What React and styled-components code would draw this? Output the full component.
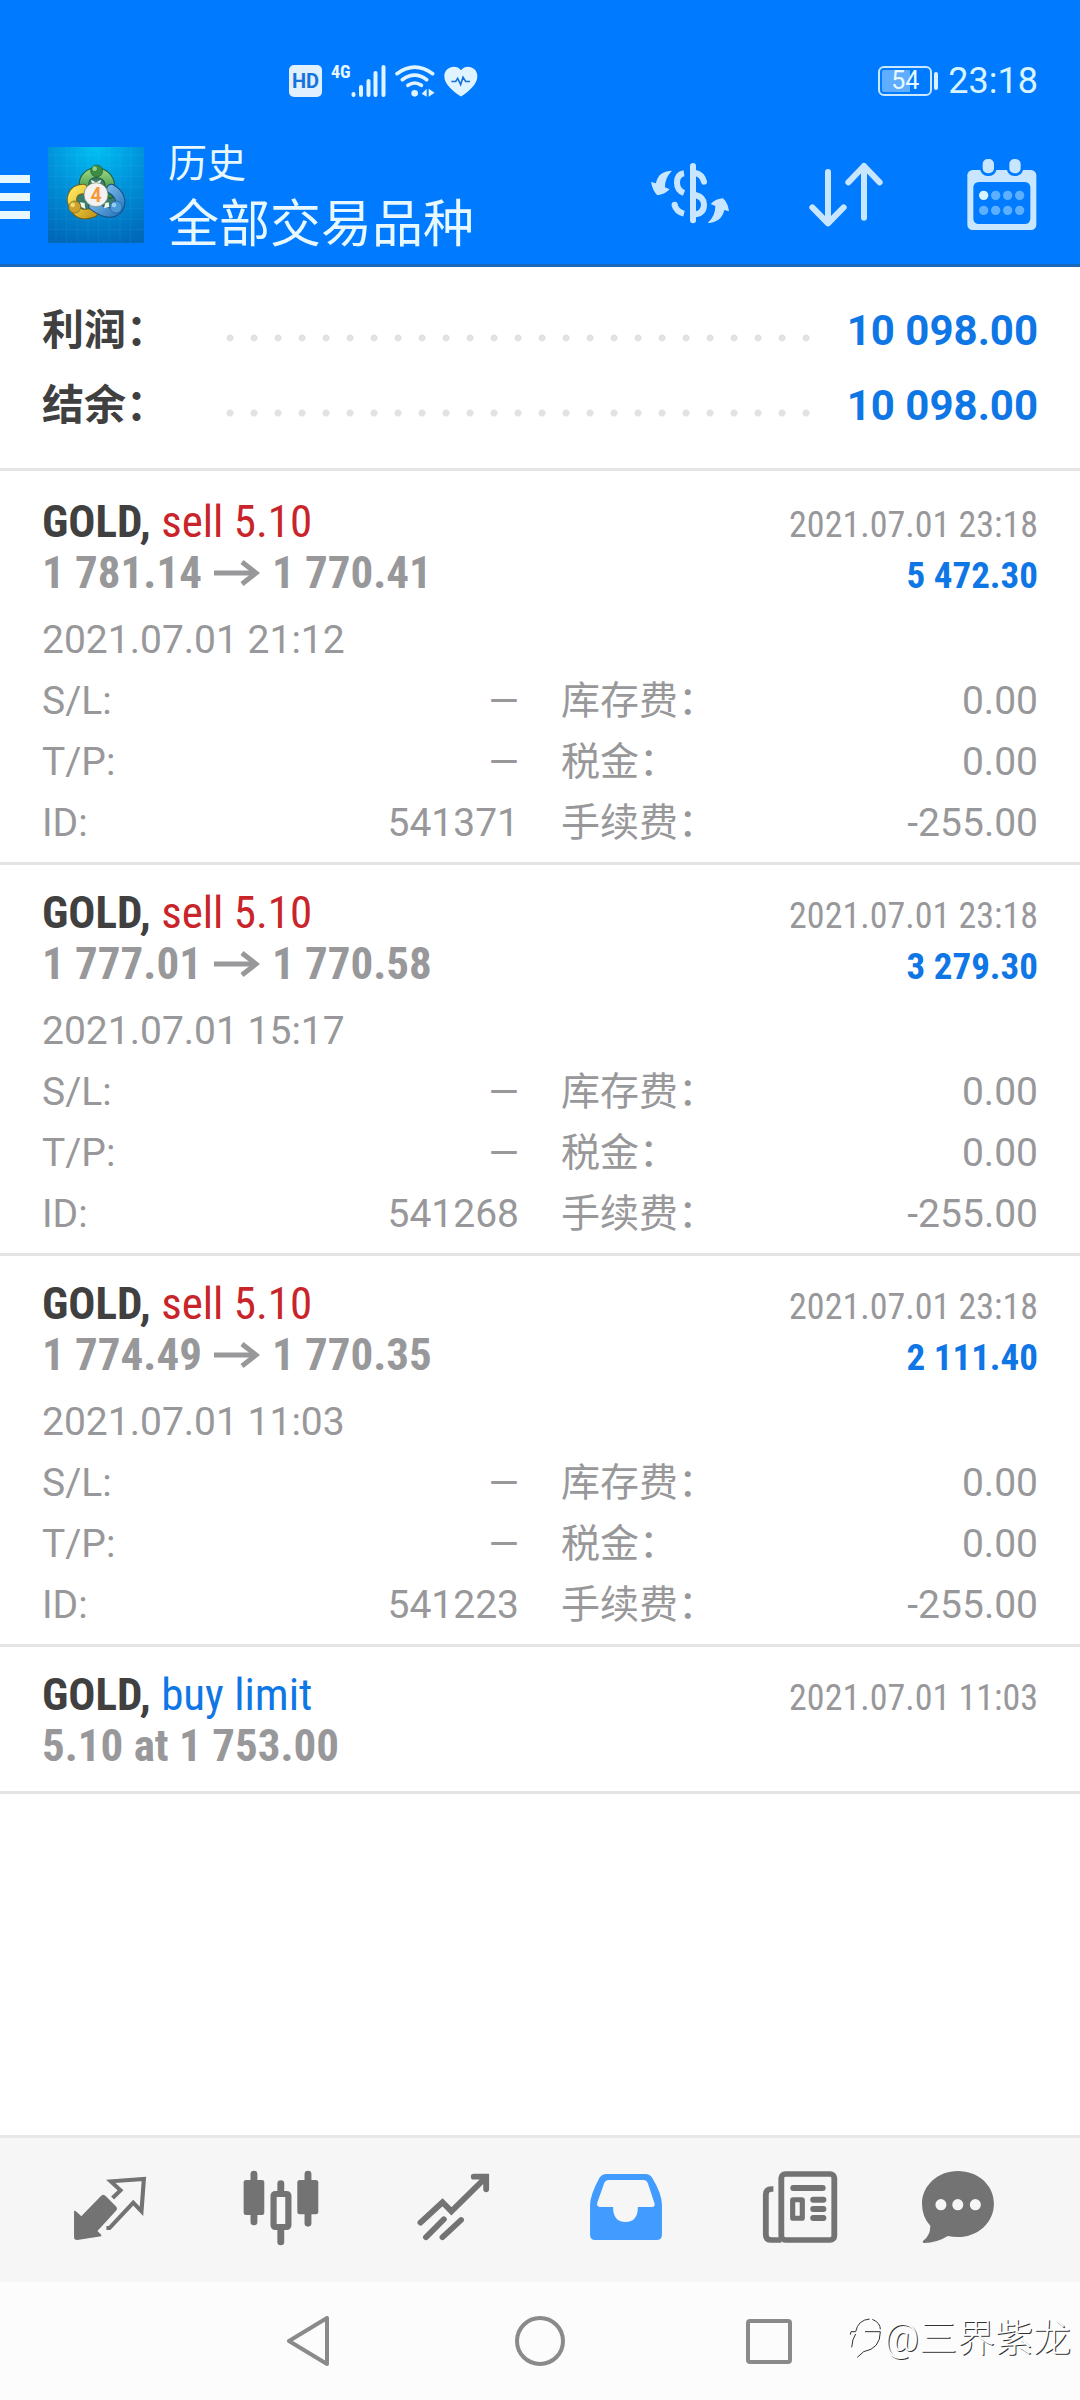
import React from "react";
import styled, { createGlobalStyle } from "styled-components";

const sans = `Roboto, "Noto Sans CJK SC", sans-serif`;
const condensed = `"Roboto Condensed", "Liberation Sans Narrow", Roboto, "Noto Sans CJK SC", sans-serif`;

const GlobalStyle = createGlobalStyle`
  *, *::before, *::after { box-sizing: border-box; }
  body { margin: 0; background: #fff; font-family: ${sans}; }
  button { border: 0; padding: 0; background: none; font: inherit; color: inherit; cursor: pointer; }
  svg { display: block; flex: none; }
  h1, p, ul, dl, dd { margin: 0; padding: 0; }
  ul { list-style: none; }
`;

const Screen = styled.div`
  display: flex;
  flex-direction: column;
  min-height: 100vh;
  background: #fff;
`;

const Top = styled.header`
  background: #007aff;
  border-bottom: 3px solid #1a68b8;
  color: #e8f8ff;
`;

const StatusBar = styled.div`
  display: flex;
  align-items: center;
  justify-content: space-between;
  height: 126px;
  padding: 36px 42px 0 289px;
`;

const StatusGroup = styled.div`
  display: flex;
  align-items: center;
  gap: ${(p) => p.$gap}px;
`;

const HdBadge = styled.span`
  width: 33px;
  border-radius: 5px;
  background: #e0f0ff;
  color: #1673dc;
  font-size: 20px;
  font-weight: 700;
  line-height: 32px;
  text-align: center;
`;

const Signal = styled.span`
  display: flex;
  align-items: flex-start;
`;

const Network = styled.span`
  font-family: ${condensed};
  font-size: 18px;
  font-weight: 700;
  line-height: 16px;
`;

const Battery = styled.span`
  display: flex;
  align-items: center;
  gap: 2px;
  &::after {
    content: "";
    width: 4px;
    height: 18px;
    border-radius: 2px;
    background: #d8f0ff;
  }
`;

const BatteryCell = styled.span`
  width: 54px;
  height: 30px;
  border: 2px solid #c8e8ff;
  border-radius: 6px;
  background: linear-gradient(90deg, #5fadff 60%, transparent 60%) content-box;
  padding: 2px;
  font-size: 25px;
  line-height: 22px;
  text-align: center;
`;

const Clock = styled.time`
  font-size: 36px;
  line-height: 36px;
  color: #d8f4ff;
`;

const AppBar = styled.div`
  display: flex;
  align-items: center;
  height: 138px;
`;

const MenuButton = styled.button`
  display: flex;
  flex-direction: column;
  gap: 10px;
  width: 48px;
  padding-top: 4px;
`;

const MenuLine = styled.span`
  width: 30px;
  height: 8px;
  background: #e8f8ff;
`;

const Titles = styled.div`
  flex: 1;
  padding-left: 24px;
`;

const Section = styled.p`
  font-size: 39px;
  line-height: 60px;
`;

const Title = styled.h1`
  font-size: 51px;
  font-weight: 400;
  line-height: 62px;
`;

const BarButton = styled.button`
  display: flex;
  justify-content: center;
  width: 156px;
`;

const Main = styled.main`
  flex: 1;
`;

const Summary = styled.dl`
  padding: 26px 42px 25px;
  border-bottom: 3px solid #e4e4e4;
`;

const SummaryRow = styled.div`
  display: flex;
  font-size: 42px;
  font-weight: 700;
  line-height: 75px;
`;

const SummaryLabel = styled.dt`
  width: 176px;
  color: #404040;
`;

const Leader = styled.span`
  flex: 1;
  margin-right: 30px;
  background: radial-gradient(circle at 12px 45px, #e2e2e2 3px, transparent 4px) 0 0 / 24px 75px repeat-x;
`;

const SummaryValue = styled.dd`
  color: #0f76e6;
`;

const List = styled.ul`
  padding-top: 3px;
`;

const Item = styled.li`
  padding: 22px 42px ${(p) => (p.$detailed ? 8 : 20)}px;
  border-bottom: 3px solid #e4e4e4;
`;

const Line = styled.div`
  display: flex;
  align-items: baseline;
  justify-content: space-between;
  height: 51px;
  font-family: ${condensed};
  line-height: 51px;
`;

const Symbol = styled.span`
  font-size: 45px;
  color: ${(p) => p.$color};
  b { color: #404040; }
`;

const Price = styled.span`
  display: flex;
  align-items: center;
  gap: 12px;
  font-size: 45px;
  font-weight: 700;
  color: #98989b;
`;

const Closed = styled.time`
  font-size: 36px;
  color: #98989b;
`;

const Profit = styled.span`
  font-size: 37px;
  font-weight: 700;
  color: #0f76e6;
`;

const Details = styled.div`
  padding-top: 12px;
  font-size: 39px;
  line-height: 61px;
  color: #98989a;
`;

const Grid = styled.dl`
  display: grid;
  grid-template-columns: 1fr 1fr;
  column-gap: 42px;
`;

const Pair = styled.div`
  display: flex;
  justify-content: space-between;
`;

const TabBar = styled.nav`
  display: flex;
  justify-content: space-between;
  padding: 24px;
  border-top: 3px solid #e8e8e8;
  background: #f6f6f6;
`;

const Tab = styled.button`
  flex: 1;
  display: flex;
  justify-content: center;
  color: ${(p) => (p.$active ? "#429bff" : "#737373")};
`;

const SystemBar = styled.footer`
  position: relative;
  display: flex;
  justify-content: center;
  height: 118px;
  background: #fcfcfc;
  color: #8a8a8a;
`;

const SystemButton = styled.button`
  display: flex;
  align-items: center;
  justify-content: center;
  width: 231px;
`;

const Watermark = styled.span`
  position: absolute;
  right: 9px;
  bottom: 37px;
  display: flex;
  align-items: center;
  font-size: 38px;
  font-weight: 300;
  line-height: 50px;
  color: #fff;
  text-shadow: 1px 1px 0 #333;
`;

const SignalIcon = () => (
  <svg width="35" height="34" viewBox="0 0 35 34" stroke="#e0f4ff" strokeWidth="4" strokeLinecap="round">
    <path d="M2.500 30v1M10 23v8M17.500 17v14M24.500 9v22M32.500 3v28" />
  </svg>
);

const WifiIcon = () => (
  <svg width="40" height="34" viewBox="376 68 120 102" fill="none" stroke="#e0f4ff" strokeWidth="11" strokeLinecap="round">
    <path d="M382 97Q435 58 489 97M398 115Q435 88 471 115M415 132Q435 118 455 132" />
    <circle cx="435" cy="156" r="10" fill="#e0f4ff" stroke="none" />
    <path d="M456 157l15-15v24zM477 142v24l18-12z" fill="#e0f4ff" stroke="none" />
  </svg>
);

const HeartIcon = () => (
  <svg width="34" height="31" viewBox="524 74 102 92">
    <path d="M575 165C550 148 525 128 525 104C525 76 560 66 575 86C590 66 624 76 624 104C624 128 600 148 575 165Z" fill="#e0f4ff" />
    <path d="M546 120h13l6-9 9 18 7-22 8 13h13" fill="none" stroke="#1673dc" strokeWidth="5" />
  </svg>
);

const Logo = () => (
  <svg width="96" height="96" viewBox="0 0 288 288">
    <defs>
      <radialGradient id="sky" cx=".5" cy="0" r="1.050">
        <stop offset="0" stopColor="#00c0f4" />
        <stop offset=".5" stopColor="#0090d8" />
        <stop offset="1" stopColor="#0068b8" />
      </radialGradient>
      <linearGradient id="green" x2="0" y2="1"><stop stopColor="#8ccf7c" /><stop offset="1" stopColor="#2f8a3c" /></linearGradient>
      <linearGradient id="gold" x2="1" y2="1"><stop stopColor="#ffe65c" /><stop offset="1" stopColor="#c79a1c" /></linearGradient>
      <linearGradient id="blue" x2="1" y2="1"><stop stopColor="#8cc8f0" /><stop offset="1" stopColor="#2c78c0" /></linearGradient>
    </defs>
    <path d="M0 0h288v288H0z" fill="url(#sky)" />
    <path d="M24 0v288M56 0v288M88 0v288M120 0v288M152 0v288M184 0v288M216 0v288M248 0v288M0 24h288M0 56h288M0 88h288M0 120h288M0 152h288M0 184h288M0 216h288M0 248h288" stroke="#7fe0ff" strokeOpacity=".12" strokeWidth="2" />
    <path d="M106 114Q112 62 146 62Q184 64 188 120L214 150Q222 196 190 206Q166 204 144 186Q120 208 84 198Q60 184 76 136Z" fill="#3a7c6c" />
    <g fill="none" strokeLinecap="round">
      <path d="M108 114C104 66 186 62 186 120V140" stroke="#245c38" strokeWidth="31" />
      <path d="M108 114C104 66 186 62 186 120V140" stroke="url(#green)" strokeWidth="25" />
      <path d="M106 126C70 128 66 158 78 180Q94 212 136 196" stroke="#6c6018" strokeWidth="31" />
      <path d="M106 126C70 128 66 158 78 180Q94 212 136 196" stroke="url(#gold)" strokeWidth="25" />
      <path d="M190 126C214 140 226 164 208 188Q182 210 136 176" stroke="#174c84" strokeWidth="31" />
      <path d="M190 126C214 140 226 164 208 188Q182 210 136 176" stroke="url(#blue)" strokeWidth="25" />
    </g>
    <path d="M128 98l16 8 16-8-6 16h-20zM96 166l14 2 2 18-12-6zM182 166l-10 2-4 16 16-4z" fill="#eef8e4" />
    <circle cx="146" cy="72" r="18" fill="#3e8c44" stroke="#1f5c34" strokeWidth="2" />
    <circle cx="140" cy="65" r="7" fill="#8ccf8a" />
    <circle cx="80" cy="180" r="18" fill="#cda22c" stroke="#75631c" strokeWidth="2" />
    <circle cx="74" cy="174" r="7" fill="#f2da74" />
    <circle cx="204" cy="180" r="18" fill="#4b9ad8" stroke="#1d5c98" strokeWidth="2" />
    <circle cx="198" cy="174" r="7" fill="#98cdf2" />
    <circle cx="144" cy="143" r="36" fill="#f4f2f0" stroke="#6c7c70" strokeWidth="2" />
    <text x="144" y="164" textAnchor="middle" fontFamily="Roboto, sans-serif" fontWeight="700" fontSize="58" fill="#f49a3c">4</text>
  </svg>
);

const CurrencyIcon = () => (
  <svg width="80" height="72" viewBox="90 86 240 216" fill="none" stroke="#c8e6ff" strokeWidth="18">
    <path d="M219 107v163" strokeLinecap="round" />
    <path d="M192 129Q171 132 171 157Q171 180 192 188M192 250Q169 244 163 223" />
    <circle cx="164" cy="223" r="9" fill="#c8e6ff" stroke="none" />
    <path d="M226 128Q246 132 252 154" strokeLinecap="round" />
    <path d="M226 194Q252 200 252 223Q252 248 226 252" />
    <path d="M156 121Q114 122 108 159L93 155Q98 181 112 195Q133 193 149 177L135 171Q134 142 156 121ZM263 278Q305 276 313 239L327 243Q324 218 309 204Q288 205 272 221L286 227Q286 258 263 278Z" fill="#c8e6ff" stroke="none" />
  </svg>
);

const SortIcon = () => (
  <svg width="80" height="72" viewBox="558 86 240 216" fill="none" stroke="#c8e6ff" strokeWidth="18" strokeLinecap="round" strokeLinejoin="round">
    <path d="M624 125v154M577 231l47 48 47-48M732 262V107M685 156l47-49 47 49" />
  </svg>
);

const CalendarIcon = () => (
  <svg width="80" height="72" viewBox="1028 84 240 216" fill="#c8e6ff">
    <rect x="1044" y="117" width="207" height="180" rx="16" />
    <rect x="1062" y="153" width="171" height="126" rx="16" fill="#007aff" />
    <rect x="1086" y="80" width="42" height="51" rx="19" stroke="#007aff" strokeWidth="8" />
    <rect x="1166" y="80" width="42" height="51" rx="19" stroke="#007aff" strokeWidth="8" />
    {[193, 238].map((y) => [1093, 1129, 1165, 1201].map((x) => (
      <circle key={`${x}-${y}`} cx={x} cy={y} r="14" fill={x === 1093 && y === 193 ? "#d8f4ff" : "#5cb0ff"} />
    )))}
  </svg>
);

const ArrowIcon = () => (
  <svg width="46" height="26" viewBox="0 0 46 26" fill="none" stroke="currentColor" strokeWidth="5">
    <path d="M0 13h42" />
    <path d="M28 2l14 11-14 11" />
  </svg>
);

const TabIcon = ({ x, children }) => (
  <svg width="96" height="96" viewBox={`${x} 126 279 288`} preserveAspectRatio="none" fill="currentColor">
    {children}
  </svg>
);

const tabs = [
  {
    label: "行情",
    icon: (
      <TabIcon x={180}>
        <path d="M299 224Q304 224 309 230L338 260Q342 266 337 272L283 333L294 344V349L224 360Q215 360 215 352V272Q222 272 236 289L291 230Q295 225 299 224Z" />
        <path d="M327 234L350 211L322 184L418 177L411 274L387 248L318 324H309" fill="none" stroke="currentColor" strokeWidth="12" />
      </TabIcon>
    ),
  },
  {
    label: "图表",
    icon: (
      <TabIcon x={681}>
        <path d="M739 162v144M896 162v148M817 191v30M817 326v40" stroke="currentColor" strokeWidth="20" strokeLinecap="round" />
        <rect x="709" y="180" width="60" height="105" rx="7" />
        <rect x="865" y="180" width="61" height="103" rx="7" />
        <rect x="796" y="222" width="43" height="99" rx="5" fill="none" stroke="currentColor" strokeWidth="18" />
      </TabIcon>
    ),
  },
  {
    label: "交易",
    icon: (
      <TabIcon x={1179}>
        <path d="M1221 308L1285 247L1311 274L1410 173M1376 170H1412V208M1237 352L1289 298M1285 352L1339 300" fill="none" stroke="currentColor" strokeWidth="17" strokeLinecap="round" />
      </TabIcon>
    ),
  },
  {
    label: "历史",
    active: true,
    icon: (
      <TabIcon x={112}>
        <path fillRule="evenodd" d="M196 162H308Q321 162 328 174Q356 222 356 255V344Q356 360 340 360H162Q147 360 147 344V255Q147 226 174 174Q181 162 196 162ZM202 180Q192 180 188 190L168 248Q165 261 178 261H214Q214 306 250 306Q286 306 286 261H326Q338 261 334 249L315 190Q311 180 302 180Z" />
      </TabIcon>
    ),
  },
  {
    label: "新闻",
    icon: (
      <TabIcon x={609}>
        <rect x="700" y="162" width="154" height="198" rx="12" fill="none" stroke="currentColor" strokeWidth="17" />
        <path d="M677 207H672Q655 207 655 224V344Q655 360 672 360H700" fill="none" stroke="currentColor" strokeWidth="17" />
        <path d="M735 204H820M793 239H822M793 267H822M793 294H822" stroke="currentColor" strokeWidth="18" strokeLinecap="round" />
        <rect x="733" y="239" width="28" height="56" rx="2" fill="none" stroke="currentColor" strokeWidth="15" />
      </TabIcon>
    ),
  },
  {
    label: "消息",
    icon: (
      <TabIcon x={1109}>
        <path fillRule="evenodd" d="M1213 153C1272 153 1318 195 1318 251C1318 309 1270 351 1213 351Q1198 351 1184 348Q1154 368 1114 369Q1108 367 1114 361Q1134 345 1133 317Q1109 290 1109 251C1109 197 1155 153 1213 153ZM1164 237a16 17 0 100 34 16 17 0 000-34ZM1213 237a16 17 0 100 34 16 17 0 000-34ZM1264 237a16 17 0 100 34 16 17 0 000-34Z" />
      </TabIcon>
    ),
  },
];

const summary = [
  ["利润：", "10 098.00"],
  ["结余：", "10 098.00"],
];

const trades = [
  { open: "1 781.14", close: "1 770.41", opened: "2021.07.01 21:12", profit: "5 472.30", id: "541371" },
  { open: "1 777.01", close: "1 770.58", opened: "2021.07.01 15:17", profit: "3 279.30", id: "541268" },
  { open: "1 774.49", close: "1 770.35", opened: "2021.07.01 11:03", profit: "2 111.40", id: "541223" },
];

const Trade = ({ open, close, opened, profit, id }) => (
  <Item $detailed>
    <Line>
      <Symbol $color="#c8242a"><b>GOLD,</b> sell 5.10</Symbol>
      <Closed>2021.07.01 23:18</Closed>
    </Line>
    <Line>
      <Price>{open}<ArrowIcon />{close}</Price>
      <Profit>{profit}</Profit>
    </Line>
    <Details>
      <time>{opened}</time>
      <Grid>
        <Pair><dt>S/L:</dt><dd>—</dd></Pair>
        <Pair><dt>库存费：</dt><dd>0.00</dd></Pair>
        <Pair><dt>T/P:</dt><dd>—</dd></Pair>
        <Pair><dt>税金：</dt><dd>0.00</dd></Pair>
        <Pair><dt>ID:</dt><dd>{id}</dd></Pair>
        <Pair><dt>手续费：</dt><dd>-255.00</dd></Pair>
      </Grid>
    </Details>
  </Item>
);

export default function App() {
  return (
    <Screen>
      <GlobalStyle />
      <Top>
        <StatusBar>
          <StatusGroup $gap={9}>
            <HdBadge>HD</HdBadge>
            <Signal><Network>4G</Network><SignalIcon /></Signal>
            <WifiIcon />
            <HeartIcon />
          </StatusGroup>
          <StatusGroup $gap={10}>
            <Battery><BatteryCell>54</BatteryCell></Battery>
            <Clock>23:18</Clock>
          </StatusGroup>
        </StatusBar>
        <AppBar>
          <MenuButton aria-label="菜单"><MenuLine /><MenuLine /><MenuLine /></MenuButton>
          <Logo />
          <Titles>
            <Section>历史</Section>
            <Title>全部交易品种</Title>
          </Titles>
          <BarButton aria-label="货币"><CurrencyIcon /></BarButton>
          <BarButton aria-label="排序"><SortIcon /></BarButton>
          <BarButton aria-label="日期"><CalendarIcon /></BarButton>
        </AppBar>
      </Top>
      <Main>
        <Summary>
          {summary.map(([label, value]) => (
            <SummaryRow key={label}>
              <SummaryLabel>{label}</SummaryLabel>
              <Leader />
              <SummaryValue>{value}</SummaryValue>
            </SummaryRow>
          ))}
        </Summary>
        <List>
          {trades.map((trade) => <Trade key={trade.id} {...trade} />)}
          <Item>
            <Line>
              <Symbol $color="#0f76e6"><b>GOLD,</b> buy limit</Symbol>
              <Closed>2021.07.01 11:03</Closed>
            </Line>
            <Line><Price>5.10 at 1 753.00</Price></Line>
          </Item>
        </List>
      </Main>
      <TabBar>
        {tabs.map((tab) => (
          <Tab key={tab.label} aria-label={tab.label} $active={tab.active}>{tab.icon}</Tab>
        ))}
      </TabBar>
      <SystemBar>
        <SystemButton aria-label="返回">
          <svg width="50" height="50" viewBox="0 0 50 50" fill="none" stroke="currentColor" strokeWidth="4" strokeLinejoin="round">
            <path d="M5 25L43 2V48Z" />
          </svg>
        </SystemButton>
        <SystemButton aria-label="主页">
          <svg width="50" height="50" viewBox="0 0 50 50" fill="none" stroke="currentColor" strokeWidth="4">
            <circle cx="25" cy="25" r="23" />
          </svg>
        </SystemButton>
        <SystemButton aria-label="最近任务">
          <svg width="50" height="50" viewBox="0 0 50 50" fill="none" stroke="currentColor" strokeWidth="4">
            <rect x="2" y="5" width="42" height="41" rx="2" />
          </svg>
        </SystemButton>
        <Watermark>
          <svg width="36" height="46" viewBox="15 45 108 138" fill="none" stroke="#333" strokeWidth="3">
            <path d="M22 104L24 95H38Q45 60 80 57M88 58Q112 68 112 88M66 95H112Q112 146 62 155L43 172M38 102Q28 116 26 142" />
          </svg>
          @三界紫龙
        </Watermark>
      </SystemBar>
    </Screen>
  );
}
